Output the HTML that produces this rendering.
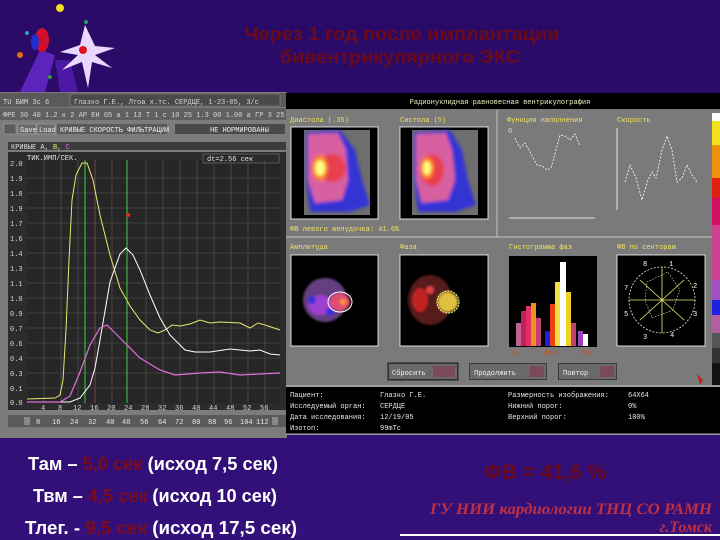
<!DOCTYPE html>
<html><head><meta charset="utf-8"><style>
html,body{margin:0;padding:0;width:720px;height:540px;overflow:hidden;background:#2e0b6c}
svg{display:block}
.m{font-family:"Liberation Mono",monospace;font-size:7px}
</style></head><body>
<svg width="720" height="540" viewBox="0 0 720 540" xmlns="http://www.w3.org/2000/svg">
<defs>
<filter id="b1"><feGaussianBlur stdDeviation="1.6"/></filter>
<filter id="b2"><feGaussianBlur stdDeviation="1"/></filter>
<linearGradient id="bg" x1="0" y1="0" x2="0" y2="1"><stop offset="0" stop-color="#2a0a66"/><stop offset="1" stop-color="#33107a"/></linearGradient>
</defs>
<rect width="720" height="540" fill="url(#bg)"/>
<!-- logo -->
<polygon points="20,92 40,50 55,55 45,92" fill="#6a2ad0" opacity="0.8"/>
<polygon points="55,60 70,60 78,92 60,92" fill="#5a20c0" opacity="0.7"/>
<polygon points="85,25 80,45 60,52 78,55 62,70 82,62 88,88 92,62 112,68 95,55 115,48 95,46" fill="#e8d8ff"/>
<circle cx="83" cy="50" r="4" fill="#e01020"/>
<ellipse cx="42" cy="40" rx="7" ry="12" fill="#d01030"/>
<ellipse cx="35" cy="42" rx="4" ry="8" fill="#2030d0"/>
<circle cx="60" cy="8" r="4" fill="#f0e020"/>
<circle cx="20" cy="55" r="3" fill="#e07010"/>
<circle cx="27" cy="33" r="2" fill="#30a0c0"/>
<circle cx="86" cy="22" r="2" fill="#20a060"/>
<circle cx="50" cy="77" r="2" fill="#20a040"/>
<!-- title -->
<g font-family="Liberation Sans,sans-serif" font-weight="bold" font-size="18" fill="#6a0a1a" text-anchor="middle">
<text x="402" y="40" textLength="315" lengthAdjust="spacingAndGlyphs">Через 1 год после имплантации</text>
<text x="400" y="63" textLength="240" lengthAdjust="spacingAndGlyphs">бивентрикулярного ЭКС</text>
</g>
<!-- LEFT PANEL -->
<rect x="0" y="92" width="287" height="346" fill="#7c7c7c"/>
<rect x="0" y="93" width="287" height="14" fill="#5a5a5a"/>
<rect x="70" y="94" width="210" height="12" fill="#4a4a4a" stroke="#9a9a9a" stroke-width="0.5"/>
<rect x="0" y="108" width="287" height="12" fill="#606060"/>
<g class="m" fill="#d8d8d8">
<text x="3" y="104">TU БИМ 3с 6</text><text x="74" y="104">Глазко Г.Е., Лтоа х.тс. СЕРДЦЕ, 1-23-05, 3/с</text>
<text x="3" y="117">ФРЕ 30 40 1.2 к 2 АР ЕН 05 а 1 13 Т 1 с 10 25 1.3 00 1.00 а ГР 3 25 2 в</text>
</g>
<rect x="4" y="124" width="12" height="10" fill="#5a5a5a" stroke="#aaa" stroke-width="0.5"/>
<rect x="18" y="124" width="18" height="10" fill="#6a6a6a" stroke="#aaa" stroke-width="0.5"/>
<rect x="37" y="124" width="18" height="10" fill="#6a6a6a" stroke="#aaa" stroke-width="0.5"/>
<rect x="57" y="124" width="110" height="10" fill="#5a5a5a"/>
<rect x="175" y="124" width="110" height="10" fill="#4a4a4a"/>
<g class="m" fill="#f0f0f0"><text x="20" y="132">Save</text><text x="39" y="132">Load</text><text x="60" y="132">КРИВЫЕ СКОРОСТЬ ФИЛЬТРАЦИИ</text><text x="210" y="132">НЕ НОРМИРОВАНЫ</text></g>
<rect x="8" y="142" width="278" height="8" fill="#3c3c3c"/>
<text x="11" y="149" class="m" fill="#e0e0e0">КРИВЫЕ А, <tspan fill="#e8e870">B</tspan>, <tspan fill="#e070e0">C</tspan></text>
<rect x="8" y="152" width="278" height="258" fill="#2c2c2c"/>
<rect x="27" y="160" width="253" height="243" fill="#262626"/>
<rect x="203" y="154" width="76" height="9" fill="#2a2a2a" stroke="#888" stroke-width="0.5"/>
<g class="m" fill="#e8e8e8"><text x="27" y="160">ТИК.ИМП/СЕК.</text><text x="207" y="161">dt=2.56 сек</text></g>
<g stroke="#5a5a5a" stroke-width="0.6">
<line x1="27" y1="178" x2="280" y2="178"/><line x1="27" y1="193" x2="280" y2="193"/><line x1="27" y1="208" x2="280" y2="208"/><line x1="27" y1="223" x2="280" y2="223"/><line x1="27" y1="238" x2="280" y2="238"/><line x1="27" y1="253" x2="280" y2="253"/><line x1="27" y1="268" x2="280" y2="268"/><line x1="27" y1="283" x2="280" y2="283"/><line x1="27" y1="298" x2="280" y2="298"/><line x1="27" y1="313" x2="280" y2="313"/><line x1="27" y1="328" x2="280" y2="328"/><line x1="27" y1="343" x2="280" y2="343"/><line x1="27" y1="358" x2="280" y2="358"/><line x1="27" y1="373" x2="280" y2="373"/><line x1="27" y1="388" x2="280" y2="388"/>
<line x1="44" y1="160" x2="44" y2="403"/><line x1="61" y1="160" x2="61" y2="403"/><line x1="78" y1="160" x2="78" y2="403"/><line x1="95" y1="160" x2="95" y2="403"/><line x1="112" y1="160" x2="112" y2="403"/><line x1="146" y1="160" x2="146" y2="403"/><line x1="163" y1="160" x2="163" y2="403"/><line x1="180" y1="160" x2="180" y2="403"/><line x1="197" y1="160" x2="197" y2="403"/><line x1="214" y1="160" x2="214" y2="403"/><line x1="231" y1="160" x2="231" y2="403"/><line x1="248" y1="160" x2="248" y2="403"/><line x1="265" y1="160" x2="265" y2="403"/>
</g>
<g class="m" fill="#d8d8d8" font-size="6">
<text x="10" y="166">2.0</text><text x="10" y="181">1.9</text><text x="10" y="196">1.8</text><text x="10" y="211">1.9</text><text x="10" y="226">1.7</text><text x="10" y="241">1.6</text><text x="10" y="256">1.4</text><text x="10" y="271">1.3</text><text x="10" y="286">1.1</text><text x="10" y="301">1.0</text><text x="10" y="316">0.9</text><text x="10" y="331">0.7</text><text x="10" y="346">0.6</text><text x="10" y="361">0.4</text><text x="10" y="376">0.3</text><text x="10" y="391">0.1</text><text x="10" y="405">0.0</text>
<text x="41" y="410">4</text><text x="58" y="410">8</text><text x="73" y="410">12</text><text x="90" y="410">16</text><text x="107" y="410">20</text><text x="124" y="410">24</text><text x="141" y="410">28</text><text x="158" y="410">32</text><text x="175" y="410">36</text><text x="192" y="410">40</text><text x="209" y="410">44</text><text x="226" y="410">48</text><text x="243" y="410">52</text><text x="260" y="410">56</text>
</g>
<line x1="85" y1="160" x2="85" y2="403" stroke="#40e040" stroke-width="0.9"/>
<line x1="127" y1="160" x2="127" y2="403" stroke="#40e040" stroke-width="0.9"/>
<line x1="95" y1="160" x2="95" y2="403" stroke="#a04060" stroke-width="0.5"/>
<circle cx="128" cy="215" r="2" fill="#e03020"/>
<polyline fill="none" stroke="#e8e870" stroke-width="1" points="27,399 55,398 60,395 63,380 66,330 69,260 72,200 76,175 82,163 87,163 93,180 100,215 110,255 120,288 130,306 140,320 150,330 158,333 165,330 172,325 180,326 190,324 200,320 210,323 220,322 240,323 250,328 258,323 265,325 280,330"/>
<polyline fill="none" stroke="#ffffff" stroke-width="1" points="27,402 70,402 80,398 90,385 95,368 100,340 110,282 120,254 126,248 133,255 140,270 150,295 160,318 170,335 185,350 195,352 210,352 230,349 250,351 260,350 270,354 280,355"/>
<polyline fill="none" stroke="#e070e0" stroke-width="1.2" points="27,402 60,402 70,396 80,372 90,345 100,328 107,325 115,333 125,343 140,358 160,370 175,375 200,373 220,372 240,375 280,373"/>
<rect x="8" y="415" width="278" height="12" fill="#5a5a5a"/>
<rect x="24" y="417" width="6" height="8" fill="#888"/><rect x="272" y="417" width="6" height="8" fill="#888"/>
<g class="m" fill="#e8e8e8" font-size="6"><text x="36" y="424">8</text><text x="52" y="424">16</text><text x="70" y="424">24</text><text x="88" y="424">32</text><text x="106" y="424">40</text><text x="122" y="424">48</text><text x="140" y="424">56</text><text x="158" y="424">64</text><text x="175" y="424">72</text><text x="192" y="424">80</text><text x="208" y="424">88</text><text x="224" y="424">96</text><text x="240" y="424">104</text><text x="256" y="424">112</text></g>
<!-- RIGHT PANEL -->
<rect x="286" y="93" width="434" height="342" fill="#7a7a7a"/>
<rect x="286" y="93" width="434" height="16" fill="#000"/>
<text x="500" y="104" class="m" fill="#f0f0c0" text-anchor="middle">Радионуклидная равновесная вентрикулография</text>
<line x1="497" y1="110" x2="497" y2="237" stroke="#e0e0e0" stroke-width="0.7"/>
<line x1="286" y1="237" x2="712" y2="237" stroke="#e0e0e0" stroke-width="0.7"/>
<g class="m" fill="#f0e060">
<text x="290" y="122">Диастола (.35)</text><text x="400" y="122">Систола (5)</text><text x="507" y="122">Функция наполнения</text><text x="617" y="122">Скорость</text>
<text x="290" y="231">ФВ левого желудочка: 41.6%</text>
<text x="290" y="249">Амплитуда</text><text x="400" y="249">Фаза</text><text x="509" y="249">Гистограмма фаз</text><text x="617" y="249">ФВ по секторам</text>
</g>
<g>
<rect x="291" y="127" width="87" height="92" fill="#000" stroke="#fff" stroke-width="0.8"/>
<rect x="304" y="130" width="66" height="85" fill="#6e6e6e"/>
<g filter="url(#b1)"><path d="M306,132 L340,130 L355,150 L362,180 L370,205 L350,212 L310,212 L306,180Z" fill="#2828e8" opacity="0.85"/>
<path d="M308,134 L338,133 L346,150 L348,180 L342,200 L315,203 L308,180Z" fill="#d860a0"/>
<ellipse cx="332" cy="168" rx="14" ry="14" fill="#e84050"/>
<ellipse cx="320" cy="168" rx="8" ry="13" fill="#ff8020"/>
<ellipse cx="320" cy="168" rx="5" ry="8" fill="#ffff80"/></g>
<rect x="400" y="127" width="88" height="92" fill="#000" stroke="#fff" stroke-width="0.8"/>
<rect x="412" y="130" width="66" height="85" fill="#6e6e6e"/>
<g filter="url(#b1)"><path d="M414,132 L450,130 L462,150 L468,180 L476,205 L455,212 L418,212 L414,180Z" fill="#2828e8" opacity="0.85"/>
<path d="M416,134 L446,133 L452,150 L455,180 L448,200 L422,203 L416,180Z" fill="#d860a0"/>
<ellipse cx="432" cy="170" rx="12" ry="16" fill="#e84050"/>
<ellipse cx="427" cy="168" rx="7" ry="11" fill="#ff8020"/>
<ellipse cx="427" cy="168" rx="4" ry="7" fill="#ffff80"/></g>
</g>
<g stroke="#fff" stroke-width="0.8" fill="none">
<line x1="509" y1="218" x2="595" y2="218"/>
<polyline stroke-dasharray="2,1.5" points="515,138 520,148 525,143 530,152 537,165 542,166 547,170 551,168 556,150 560,135 565,136 570,140 575,134 580,146"/>
<line x1="617" y1="128" x2="617" y2="210"/>
<polyline stroke-dasharray="2,1.5" points="625,182 630,165 636,178 642,200 648,180 652,172 656,178 662,150 667,136 672,150 677,182 682,178 687,165 692,175 697,182"/>
</g>
<g fill="#ddd" class="m" font-size="5"><text x="508" y="133">0</text></g>
<rect x="712" y="113" width="8" height="8" fill="#fff"/><rect x="712" y="121" width="8" height="24" fill="#f0e020"/><rect x="712" y="145" width="8" height="33" fill="#f09010"/><rect x="712" y="178" width="8" height="20" fill="#e02010"/><rect x="712" y="198" width="8" height="27" fill="#d01060"/><rect x="712" y="225" width="8" height="55" fill="#d04090"/><rect x="712" y="280" width="8" height="20" fill="#a050c0"/><rect x="712" y="300" width="8" height="15" fill="#2020e0"/><rect x="712" y="315" width="8" height="18" fill="#b060a0"/><rect x="712" y="333" width="8" height="15" fill="#555"/><rect x="712" y="348" width="8" height="15" fill="#333"/><rect x="712" y="363" width="8" height="22" fill="#111"/>
<rect x="291" y="255" width="87" height="91" fill="#000" stroke="#fff" stroke-width="0.8"/>
<g filter="url(#b2)"><ellipse cx="325" cy="300" rx="22" ry="22" fill="#8050a0" opacity="0.8"/><ellipse cx="320" cy="305" rx="12" ry="10" fill="#a040d0"/><ellipse cx="340" cy="302" rx="10" ry="9" fill="#e05070"/><circle cx="312" cy="300" r="4" fill="#3030e0"/><circle cx="330" cy="312" r="4" fill="#3030e0"/><circle cx="343" cy="302" r="3" fill="#ff9030"/></g>
<ellipse cx="340" cy="302" rx="12" ry="10" fill="none" stroke="#fff" stroke-width="1"/>
<rect x="400" y="255" width="88" height="91" fill="#000" stroke="#fff" stroke-width="0.8"/>
<g filter="url(#b2)"><ellipse cx="430" cy="300" rx="22" ry="25" fill="#602020" opacity="0.9"/><ellipse cx="420" cy="300" rx="8" ry="12" fill="#c02020"/><ellipse cx="448" cy="302" rx="10" ry="10" fill="#e0c040"/><circle cx="430" cy="290" r="4" fill="#e04040"/></g>
<ellipse cx="448" cy="302" rx="11" ry="11" fill="none" stroke="#ffff90" stroke-width="1" stroke-dasharray="2,1"/>
<rect x="509" y="256" width="88" height="91" fill="#000"/>
<g>
<rect x="516" y="323" width="5" height="23" fill="#c06090"/><rect x="521" y="311" width="5" height="35" fill="#c02060"/><rect x="526" y="306" width="5" height="40" fill="#e03060"/><rect x="531" y="303" width="5" height="43" fill="#f09020"/><rect x="536" y="318" width="5" height="28" fill="#c04070"/><rect x="545" y="331" width="5" height="15" fill="#2020e0"/><rect x="550" y="304" width="5" height="42" fill="#f04010"/><rect x="555" y="282" width="5" height="64" fill="#f0e040"/><rect x="560" y="262" width="6" height="84" fill="#ffffff"/><rect x="566" y="292" width="5" height="54" fill="#f0d020"/><rect x="571" y="323" width="5" height="23" fill="#c04070"/><rect x="578" y="331" width="5" height="15" fill="#a040c0"/><rect x="583" y="334" width="5" height="12" fill="#ffffff"/>
</g>
<g class="m" fill="#f04010" font-size="6"><text x="513" y="355">0</text><text x="544" y="355">180</text><text x="580" y="355">360</text></g>
<rect x="617" y="255" width="88" height="91" fill="#000" stroke="#fff" stroke-width="0.8"/>
<circle cx="662" cy="300" r="33" fill="none" stroke="#f0f0c0" stroke-width="0.8" stroke-dasharray="2,1.5"/>
<path d="M647,282 L668,272 L680,290 L673,310 L652,318 L645,300Z" fill="none" stroke="#f0f0c0" stroke-width="0.6" stroke-dasharray="1.5,1.5"/>
<g stroke="#f0f070" stroke-width="0.8"><line x1="629" y1="300" x2="695" y2="300"/><line x1="662" y1="267" x2="662" y2="333"/><line x1="640" y1="320" x2="684" y2="280"/><line x1="640" y1="280" x2="684" y2="320"/></g>
<g class="m" fill="#fff" font-size="8"><text x="643" y="266">8</text><text x="669" y="266">1</text><text x="693" y="288">2</text><text x="693" y="316">3</text><text x="670" y="337">4</text><text x="643" y="339">3</text><text x="624" y="316">5</text><text x="624" y="290">7</text></g>
<g><rect x="388" y="363" width="70" height="17" fill="#3a3a3a" stroke="#222"/><rect x="389" y="364" width="68" height="15" fill="#6a6a6a"/><rect x="433" y="366" width="22" height="11" fill="#7a4a5a"/>
<rect x="469" y="363" width="78" height="17" fill="#3a3a3a"/><rect x="470" y="364" width="76" height="15" fill="#6a6a6a"/><rect x="530" y="366" width="14" height="11" fill="#7a4a5a"/>
<rect x="558" y="363" width="59" height="17" fill="#3a3a3a"/><rect x="559" y="364" width="57" height="15" fill="#6a6a6a"/><rect x="600" y="366" width="14" height="11" fill="#7a4a5a"/></g>
<g class="m" fill="#f0f0f0" font-size="7"><text x="392" y="375">Сбросить</text><text x="474" y="375">Продолжить</text><text x="563" y="375">Повтор</text></g>
<path d="M697,374 L703,380 L700,385 Z" fill="#c02010"/>
<rect x="286" y="387" width="434" height="47" fill="#000"/>
<line x1="286" y1="386" x2="720" y2="386" stroke="#ddd" stroke-width="0.8"/>
<line x1="286" y1="434" x2="720" y2="434" stroke="#ddd" stroke-width="0.8"/>
<g class="m" fill="#e8e8e8" font-size="7">
<text x="290" y="397">Пациент:</text><text x="380" y="397">Глазко Г.Е.</text><text x="508" y="397">Размерность изображения:</text><text x="628" y="397">64Х64</text>
<text x="290" y="408">Исследуемый орган:</text><text x="380" y="408">СЕРДЦЕ</text><text x="508" y="408">Нижний порог:</text><text x="628" y="408">0%</text>
<text x="290" y="419">Дата исследования:</text><text x="380" y="419">12/19/05</text><text x="508" y="419">Верхний порог:</text><text x="628" y="419">100%</text>
<text x="290" y="430">Изотоп:</text><text x="380" y="430">99mTc</text>
</g>
<!-- bottom text -->
<g font-family="Liberation Sans,sans-serif" font-size="18" font-weight="bold" fill="#ffffff">
<text x="28" y="470" textLength="250" lengthAdjust="spacingAndGlyphs">Там – <tspan fill="#7a0c1c">5,0 сек</tspan> (исход 7,5 сек)</text>
<text x="33" y="502" textLength="244" lengthAdjust="spacingAndGlyphs">Твм – <tspan fill="#7a0c1c">4,5 сек</tspan> (исход 10 сек)</text>
<text x="25" y="534" textLength="272" lengthAdjust="spacingAndGlyphs">Тлег. - <tspan fill="#7a0c1c">9,5 сек</tspan> (исход 17,5 сек)</text>
</g>
<text x="545" y="479" font-family="Liberation Sans,sans-serif" font-size="21" font-weight="bold" fill="#6a0a1a" text-anchor="middle">ФВ = 41,6 %</text>
<g font-family="Liberation Serif,serif" font-style="italic" font-weight="bold" font-size="16" fill="#c03040" text-anchor="end">
<text x="712" y="514" textLength="282" lengthAdjust="spacingAndGlyphs">ГУ НИИ кардиологии ТНЦ СО РАМН</text>
<text x="712" y="532">г.Томск</text>
</g>
<line x1="400" y1="535" x2="720" y2="535" stroke="#fff" stroke-width="2"/>
</svg>
</body></html>
